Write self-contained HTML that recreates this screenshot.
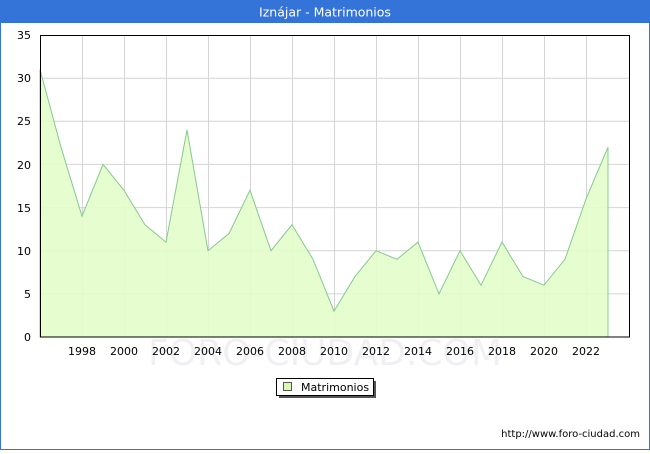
<!DOCTYPE html>
<html><head><meta charset="utf-8"><style>
body{margin:0;width:650px;height:450px;overflow:hidden;background:#fff;font-family:"DejaVu Sans","Liberation Sans",sans-serif;}
</style></head><body>
<svg width="650" height="450" xmlns="http://www.w3.org/2000/svg" font-family="DejaVu Sans, Liberation Sans, sans-serif">
<rect x="0.5" y="0.5" width="649" height="449" fill="#fff" stroke="#3473d8"/>
<rect x="0" y="0" width="650" height="23" fill="#3473d8"/>
<text x="325" y="16.5" fill="#fff" font-size="12.5" text-anchor="middle">Iznájar - Matrimonios</text>
<text x="325" y="365" fill="#f0f0f4" font-size="36" text-anchor="middle">FORO-CIUDAD.COM</text>
<g stroke="#d4d4d4" stroke-width="1">
<line x1="40" y1="293.9" x2="630" y2="293.9"/><line x1="40" y1="250.7" x2="630" y2="250.7"/><line x1="40" y1="207.6" x2="630" y2="207.6"/><line x1="40" y1="164.4" x2="630" y2="164.4"/><line x1="40" y1="121.3" x2="630" y2="121.3"/><line x1="40" y1="78.2" x2="630" y2="78.2"/>
<line x1="82.5" y1="35" x2="82.5" y2="337"/><line x1="124.5" y1="35" x2="124.5" y2="337"/><line x1="166.5" y1="35" x2="166.5" y2="337"/><line x1="208.5" y1="35" x2="208.5" y2="337"/><line x1="250.5" y1="35" x2="250.5" y2="337"/><line x1="292.5" y1="35" x2="292.5" y2="337"/><line x1="334.5" y1="35" x2="334.5" y2="337"/><line x1="376.5" y1="35" x2="376.5" y2="337"/><line x1="418.5" y1="35" x2="418.5" y2="337"/><line x1="460.5" y1="35" x2="460.5" y2="337"/><line x1="502.5" y1="35" x2="502.5" y2="337"/><line x1="544.5" y1="35" x2="544.5" y2="337"/><line x1="586.5" y1="35" x2="586.5" y2="337"/>
</g>
<polygon fill="#e3fdcb" fill-opacity="0.9" stroke="#86c98f" stroke-width="1" points="40,337 40,69.5 61,147.2 82,216.2 103,164.4 124,190.3 145,224.8 166,242.1 187,129.9 208,250.7 229,233.5 250,190.3 271,250.7 292,224.8 313,259.3 334,311.1 355,276.6 376,250.7 397,259.3 418,242.1 439,293.9 460,250.7 481,285.2 502,242.1 523,276.6 544,285.2 565,259.3 586,198.9 608,147.2 608,337"/>
<rect x="40.5" y="35.5" width="589" height="301.5" fill="none" stroke="#000"/>
<g font-size="11" fill="#000" text-anchor="end">
<text x="31" y="341">0</text><text x="31" y="298">5</text><text x="31" y="255">10</text><text x="31" y="212">15</text><text x="31" y="169">20</text><text x="31" y="125">25</text><text x="31" y="82">30</text><text x="31" y="39">35</text>
</g>
<g font-size="11" fill="#000" text-anchor="middle">
<text x="82" y="355">1998</text><text x="124" y="355">2000</text><text x="166" y="355">2002</text><text x="208" y="355">2004</text><text x="250" y="355">2006</text><text x="292" y="355">2008</text><text x="334" y="355">2010</text><text x="376" y="355">2012</text><text x="418" y="355">2014</text><text x="460" y="355">2016</text><text x="502" y="355">2018</text><text x="544" y="355">2020</text><text x="586" y="355">2022</text>
</g>
<rect x="279" y="381" width="97" height="17" fill="#555"/>
<rect x="276.5" y="378.5" width="97" height="17" fill="#fff" stroke="#000"/>
<rect x="283.5" y="382.5" width="8" height="8" fill="#d8fbb0" stroke="#555"/>
<text x="301" y="391" font-size="11">Matrimonios</text>
<text x="640" y="437" font-size="10" text-anchor="end">http://www.foro-ciudad.com</text>
</svg>
</body></html>
